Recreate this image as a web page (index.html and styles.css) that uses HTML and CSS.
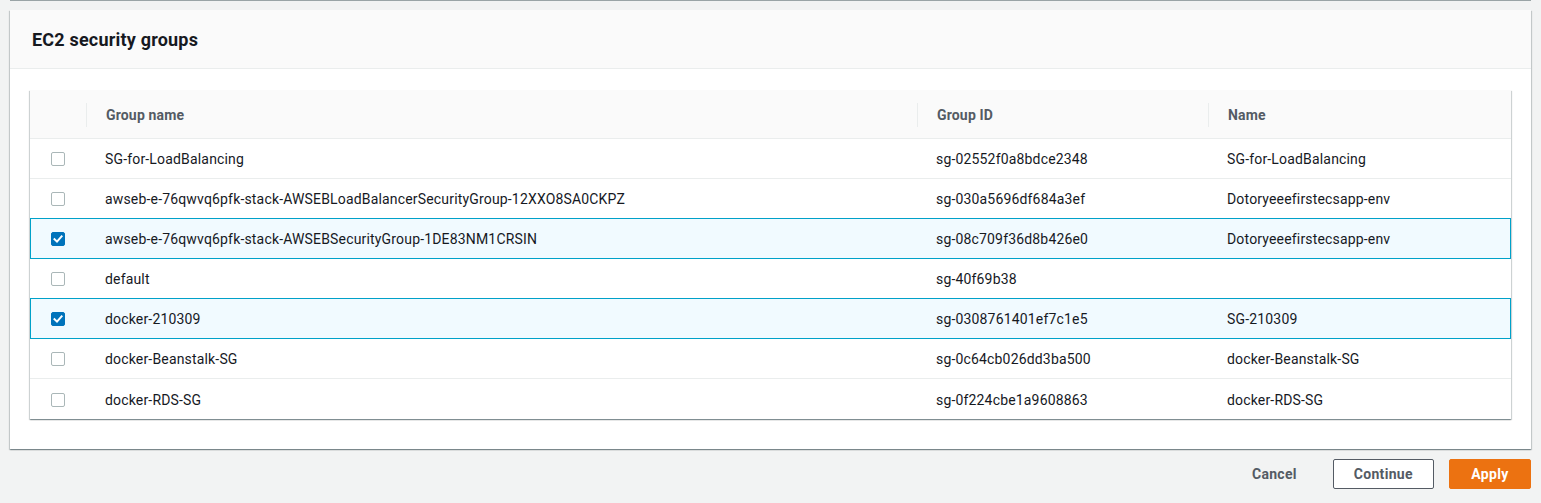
FILE: index.html
```html
<!DOCTYPE html>
<html>
<head>
<meta charset="utf-8">
<link rel="stylesheet" href="styles.css">
</head>
<body>
<div class="prev-card"></div>
<section class="card">
  <header class="card-header"><h2>EC2 security groups</h2></header>
  <div class="card-body">
    <div class="table">
      <div class="row head">
        <div class="cell"></div>
        <div class="cell"><span class="th">Group name</span></div>
        <div class="cell"><span class="th">Group ID</span></div>
        <div class="cell"><span class="th">Name</span></div>
      </div>
      <div class="row">
        <div class="cell"><span class="cb"></span></div>
        <div class="cell txt">SG-for-LoadBalancing</div>
        <div class="cell txt">sg-02552f0a8bdce2348</div>
        <div class="cell txt">SG-for-LoadBalancing</div>
      </div>
      <div class="row">
        <div class="cell"><span class="cb"></span></div>
        <div class="cell txt">awseb-e-76qwvq6pfk-stack-AWSEBLoadBalancerSecurityGroup-12XXO8SA0CKPZ</div>
        <div class="cell txt">sg-030a5696df684a3ef</div>
        <div class="cell txt">Dotoryeeefirstecsapp-env</div>
      </div>
      <div class="row sel">
        <div class="cell"><span class="cb on"><svg viewBox="0 0 14 14" width="14" height="14"><path d="M3.5 7.2 L6 9.6 L10.6 4.4" fill="none" stroke="#fff" stroke-width="2" stroke-linecap="square"/></svg></span></div>
        <div class="cell txt">awseb-e-76qwvq6pfk-stack-AWSEBSecurityGroup-1DE83NM1CRSIN</div>
        <div class="cell txt">sg-08c709f36d8b426e0</div>
        <div class="cell txt">Dotoryeeefirstecsapp-env</div>
      </div>
      <div class="row">
        <div class="cell"><span class="cb"></span></div>
        <div class="cell txt">default</div>
        <div class="cell txt">sg-40f69b38</div>
        <div class="cell txt"></div>
      </div>
      <div class="row sel">
        <div class="cell"><span class="cb on"><svg viewBox="0 0 14 14" width="14" height="14"><path d="M3.5 7.2 L6 9.6 L10.6 4.4" fill="none" stroke="#fff" stroke-width="2" stroke-linecap="square"/></svg></span></div>
        <div class="cell txt">docker-210309</div>
        <div class="cell txt">sg-0308761401ef7c1e5</div>
        <div class="cell txt">SG-210309</div>
      </div>
      <div class="row">
        <div class="cell"><span class="cb"></span></div>
        <div class="cell txt">docker-Beanstalk-SG</div>
        <div class="cell txt">sg-0c64cb026dd3ba500</div>
        <div class="cell txt">docker-Beanstalk-SG</div>
      </div>
      <div class="row last">
        <div class="cell"><span class="cb"></span></div>
        <div class="cell txt">docker-RDS-SG</div>
        <div class="cell txt">sg-0f224cbe1a9608863</div>
        <div class="cell txt">docker-RDS-SG</div>
      </div>
    </div>
  </div>
</section>
<div class="actions">
  <button class="btn link">Cancel</button>
  <button class="btn normal">Continue</button>
  <button class="btn primary">Apply</button>
</div>
</body>
</html>
```
FILE: styles.css
```css
html, body { margin: 0; padding: 0; }
body {
  background: #f2f3f3;
  padding: 0 10px;
  font-family: Roboto, "Liberation Sans", Arial, sans-serif;
  color: #16191f;
  font-size: 14px;
  letter-spacing: 0.17px;
}
.prev-card {
  height: 1px;
  background: #9aa4a6;
  margin-bottom: 9px;
}
.card {
  background: #fff;
  box-shadow: 0 1px 1px 0 rgba(0,28,36,.3), 1px 1px 1px 0 rgba(0,28,36,.15), -1px 1px 1px 0 rgba(0,28,36,.15);
}
.card-header {
  background: #fafafa;
  border-bottom: 1px solid #eaeded;
  height: 58px;
  display: flex;
  align-items: center;
  padding: 0 22px;
}
.card-header h2 {
  margin: 0;
  font-size: 18px;
  font-weight: 700;
  color: #16191f;
  letter-spacing: 0.2px;
}
.card-body { padding: 21px 20px 30px; }
.table {
  box-shadow: 0 1px 1px 0 rgba(0,28,36,.3), 1px 1px 1px 0 rgba(0,28,36,.15), -1px 1px 1px 0 rgba(0,28,36,.15);
  background: #fff;
}
.row {
  display: grid;
  grid-template-columns: 56px 831px 291px 1fr;
  height: 40px;
  box-sizing: border-box;
  border-bottom: 1px solid #eaeded;
}
.row.last { border-bottom: none; }
.row.head {
  height: 49px;
  background: #fafafa;
}
.row.sel {
  grid-template-columns: 55px 831px 291px 1fr;
  background: #f1faff;
  border: 1px solid #00a1c9;
  margin-top: -1px;
  height: 41px;
}
.cell {
  display: flex;
  align-items: center;
  min-width: 0;
  white-space: nowrap;
  padding-top: 1px;
}
.txt { padding-left: 19px; }
.th {
  border-left: 1px solid #eaeded;
  padding-left: 19px;
  line-height: 24px;
  font-weight: 700;
  color: #545b64;
}
.cb {
  margin-left: 21px;
  width: 14px;
  height: 14px;
  box-sizing: border-box;
  border: 1px solid #aab7b8;
  border-radius: 2px;
  background: #fff;
  display: block;
}
.row.sel .cb { margin-left: 20px; }
.cb.on {
  background: #0073bb;
  border-color: #0073bb;
}
.cb.on svg { display: block; margin: -1px; }
.actions {
  display: flex;
  justify-content: flex-end;
  align-items: center;
  gap: 15px;
  margin-top: 10px;
}
.btn {
  font-family: Roboto, "Liberation Sans", Arial, sans-serif;
  font-size: 14px;
  font-weight: 700;
  letter-spacing: 0.3px;
  height: 30px;
  border-radius: 2px;
  padding: 0 20px;
  cursor: pointer;
}
.btn.link { background: transparent; border: 1px solid transparent; color: #545b64; }
.btn.normal { background: #fff; border: 1px solid #545b64; color: #545b64; }
.btn.primary { background: #ec7211; border: 1px solid #ec7211; color: #fff; padding: 0 21.5px; }
```
